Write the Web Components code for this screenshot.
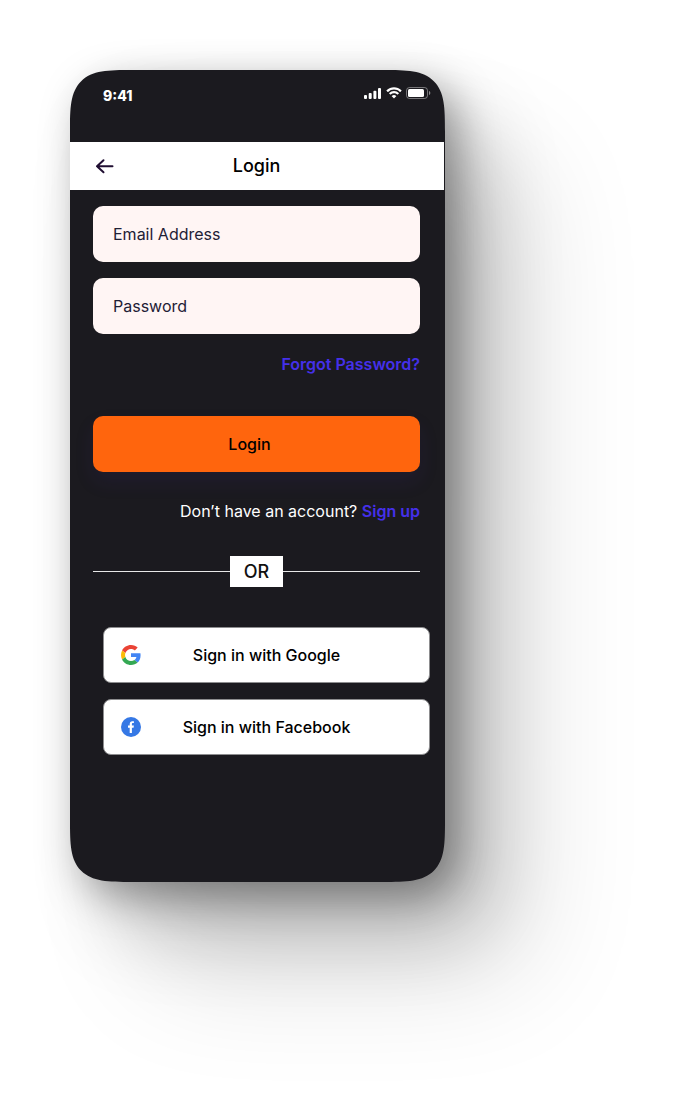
<!DOCTYPE html>
<html lang="en">
<head>
<meta charset="utf-8">
<meta name="viewport" content="width=device-width, initial-scale=1">
<title>Login</title>
<style>
  body { margin: 0; min-height: 100vh; background: #fff; font-family: Inter, "Open Sans", sans-serif; font-size: 16px; line-height: 24px; }
</style>
</head>
<body>
<login-screen></login-screen>
<script>
const define = (name, html) => customElements.define(name, class extends HTMLElement {
  connectedCallback() {
    if (this.shadowRoot) return;
    this.attachShadow({ mode: 'open', delegatesFocus: true }).innerHTML = html(this);
  }
});

define('status-bar', () => `
  <style>
    :host { display: flex; justify-content: space-between; align-items: flex-start; height: 56px; padding: 16px 14px 0 33px; color: #fff; }
    time { font-size: 14px; line-height: 20px; font-weight: 800; }
    .icons { display: flex; gap: 4px; align-items: center; height: 14px; }
    svg { display: block; fill: #fff; }
  </style>
  <time>9:41</time>
  <div class="icons">
    <svg width="18" height="12" viewBox="0 0 18 12" aria-hidden="true"><rect x="0" y="8" width="3" height="4" rx="1"/><rect x="4.7" y="6" width="3" height="6" rx="1"/><rect x="9.4" y="3.7" width="3" height="8.3" rx="1"/><rect x="14" y="1" width="3" height="11" rx="1"/></svg>
    <svg width="16" height="12" viewBox="0 0 16 12" aria-hidden="true"><path d="M8 2.6c2.2 0 4.300.85 5.900 2.360.12.11.31.11.43 0l1.140-1.150a.32.32 0 0 0 0-.46c-4.180-4-10.760-4-14.940 0a.32.32 0 0 0 0 .46l1.150 1.150c.12.11.31.11.43 0A8.560 8.560 0 0 1 8 2.600zm0 3.750c1.210 0 2.380.45 3.270 1.260.12.120.31.110.430 0l1.140-1.160a.33.33 0 0 0 0-.46 7.060 7.060 0 0 0-9.680 0 .33.33 0 0 0 0 .46l1.150 1.160c.12.110.31.120.430 0A4.870 4.870 0 0 1 8 6.350zm2.240 2.530c.12.130.120.340 0 .460l-2.020 2.030a.31.31 0 0 1-.440 0L5.760 9.340a.32.32 0 0 1 0-.46 3.460 3.460 0 0 1 4.480 0z"/></svg>
    <svg width="25" height="12" viewBox="0 0 25 12" aria-hidden="true"><rect x=".5" y=".5" width="21" height="11" rx="3" fill="none" stroke="#fff" stroke-opacity=".4"/><rect x="2" y="2" width="16" height="8" rx="1.500"/><path d="M23 4v4c.8-.3 1.300-1.100 1.300-2S23.800 4.300 23 4z" fill-opacity=".5"/></svg>
  </div>`);

define('title-bar', () => `
  <style>
    :host { display: grid; grid-template-columns: 20px 1fr 20px; align-items: center; height: 48px; margin-right: 1px; padding: 0 26px 0 25px; background: #fff; color: #000; }
    h1 { margin: 0; text-align: center; font-size: 18px; line-height: 24px; font-weight: 500; }
    button { padding: 0; border: 0; background: none; cursor: pointer; }
    svg { display: block; }
  </style>
  <button type="button" aria-label="Back"><svg width="20" height="20" viewBox="0 0 20 20" fill="none" stroke="#200e32" stroke-width="2" stroke-linecap="round" stroke-linejoin="round"><path d="M17.500 10.300H2M8.500 4.300l-6.500 6 6.500 6"/></svg></button>
  <h1><slot></slot></h1>`);

define('text-field', el => `
  <style>
    :host { display: block; }
    input { box-sizing: border-box; display: block; width: 100%; height: 56px; padding: 0 20px; border: 0; border-radius: 10px; background: #fff5f4; color: #1e2036; font: inherit; }
    input::placeholder { color: #1e2036; opacity: 1; }
  </style>
  <input type="${el.getAttribute('type')}" placeholder="${el.getAttribute('label')}" aria-label="${el.getAttribute('label')}">`);

define('text-link', () => `
  <style>
    :host { display: inline; }
    a { color: #4530ea; font-weight: 600; text-decoration: none; }
  </style>
  <a href="#"><slot></slot></a>`);

define('primary-button', () => `
  <style>
    :host { display: block; }
    button { display: block; width: 100%; height: 56px; padding: 0 14px 0 0; border: 0; border-radius: 10px; background: #ff650d; color: #000; font: inherit; font-weight: 500; box-shadow: 0 10px 20px rgba(80, 50, 180, .1); cursor: pointer; }
  </style>
  <button type="submit"><slot></slot></button>`);

define('or-divider', () => `
  <style>
    :host { display: flex; align-items: center; height: 31px; }
    :host::before, :host::after { content: ""; flex: 1; height: 1px; background: #e8e8e8; }
    span { padding: 0 14px; background: #fff; color: #111; font-size: 18px; line-height: 31px; font-weight: 500; }
  </style>
  <span><slot></slot></span>`);

define('social-button', () => `
  <style>
    :host { display: block; }
    button { box-sizing: border-box; display: grid; grid-template-columns: 20px 1fr 20px; align-items: center; width: 100%; height: 56px; padding: 0 17px; border: 1px solid #8d8d8f; border-radius: 8px; background: #fff; color: #000; font: inherit; font-weight: 500; cursor: pointer; }
    ::slotted(svg) { display: block; }
  </style>
  <button type="button"><slot name="icon"></slot><span><slot></slot></span></button>`);

define('login-screen', () => `
  <style>
    :host { box-sizing: border-box; display: block; min-height: 100vh; padding: 70px; overflow: hidden; }
    main { box-sizing: border-box; max-width: 375px; min-height: 812px; padding-bottom: 48px; background: #1b1a1f; border-radius: 42px;
      box-shadow: 12px 14px 40px rgba(0,0,0,.34), 40px 48px 80px rgba(0,0,0,.2), 80px 90px 120px rgba(0,0,0,.14); }
    @supports (corner-shape: superellipse(1.8)) {
      main { border-radius: 62px; corner-shape: superellipse(1.8); }
    }
    form { padding: 16px 25px 0 23px; }
    text-field { margin-bottom: 16px; }
    p { margin: 0; text-align: right; color: #fff; }
    .forgot { margin: 18px 0 40px; }
    .signup { margin: 27px 0 33px; }
    .social { display: grid; gap: 16px; padding: 40px 15px 0 33px; }
  </style>
  <main>
    <status-bar></status-bar>
    <title-bar>Login</title-bar>
    <form>
      <text-field type="email" label="Email Address"></text-field>
      <text-field type="password" label="Password"></text-field>
      <p class="forgot"><text-link>Forgot Password?</text-link></p>
      <primary-button>Login</primary-button>
      <p class="signup">Don’t have an account? <text-link>Sign up</text-link></p>
      <or-divider>OR</or-divider>
    </form>
    <div class="social">
      <social-button>
        <svg slot="icon" width="20" height="20" viewBox="0 0 48 48" aria-hidden="true"><path fill="#EA4335" d="M24 9.500c3.540 0 6.710 1.220 9.210 3.600l6.850-6.850C35.900 2.380 30.470 0 24 0 14.620 0 6.510 5.380 2.560 13.220l7.980 6.190C12.430 13.720 17.740 9.500 24 9.500z"/><path fill="#4285F4" d="M46.980 24.550c0-1.570-.15-3.090-.38-4.550H24v9.020h12.940c-.58 2.960-2.260 5.480-4.780 7.180l7.730 6c4.510-4.180 7.090-10.360 7.090-17.650z"/><path fill="#FBBC05" d="M10.530 28.590c-.48-1.450-.76-2.990-.76-4.590s.27-3.140.76-4.590l-7.980-6.190C.92 16.460 0 20.120 0 24c0 3.880.92 7.540 2.560 10.780l7.970-6.190z"/><path fill="#34A853" d="M24 48c6.480 0 11.930-2.130 15.890-5.810l-7.730-6c-2.150 1.450-4.920 2.300-8.160 2.300-6.260 0-11.570-4.220-13.470-9.910l-7.980 6.190C6.510 42.620 14.620 48 24 48z"/></svg>
        Sign in with Google
      </social-button>
      <social-button>
        <svg slot="icon" width="20" height="20" viewBox="0 0 20 20" aria-hidden="true"><circle cx="10" cy="10" r="10" fill="#3578e5"/><path fill="#fff" d="M8.700 16v-5.300H7V8.600h1.700V7.200c0-2 1-3 2.700-3 .8 0 1.500.1 1.500.1v1.800h-.9c-.9 0-1.100.5-1.100 1.100v1.400h2l-.3 2.100h-1.700V16z"/></svg>
        Sign in with Facebook
      </social-button>
    </div>
  </main>`);
</script>
</body>
</html>
